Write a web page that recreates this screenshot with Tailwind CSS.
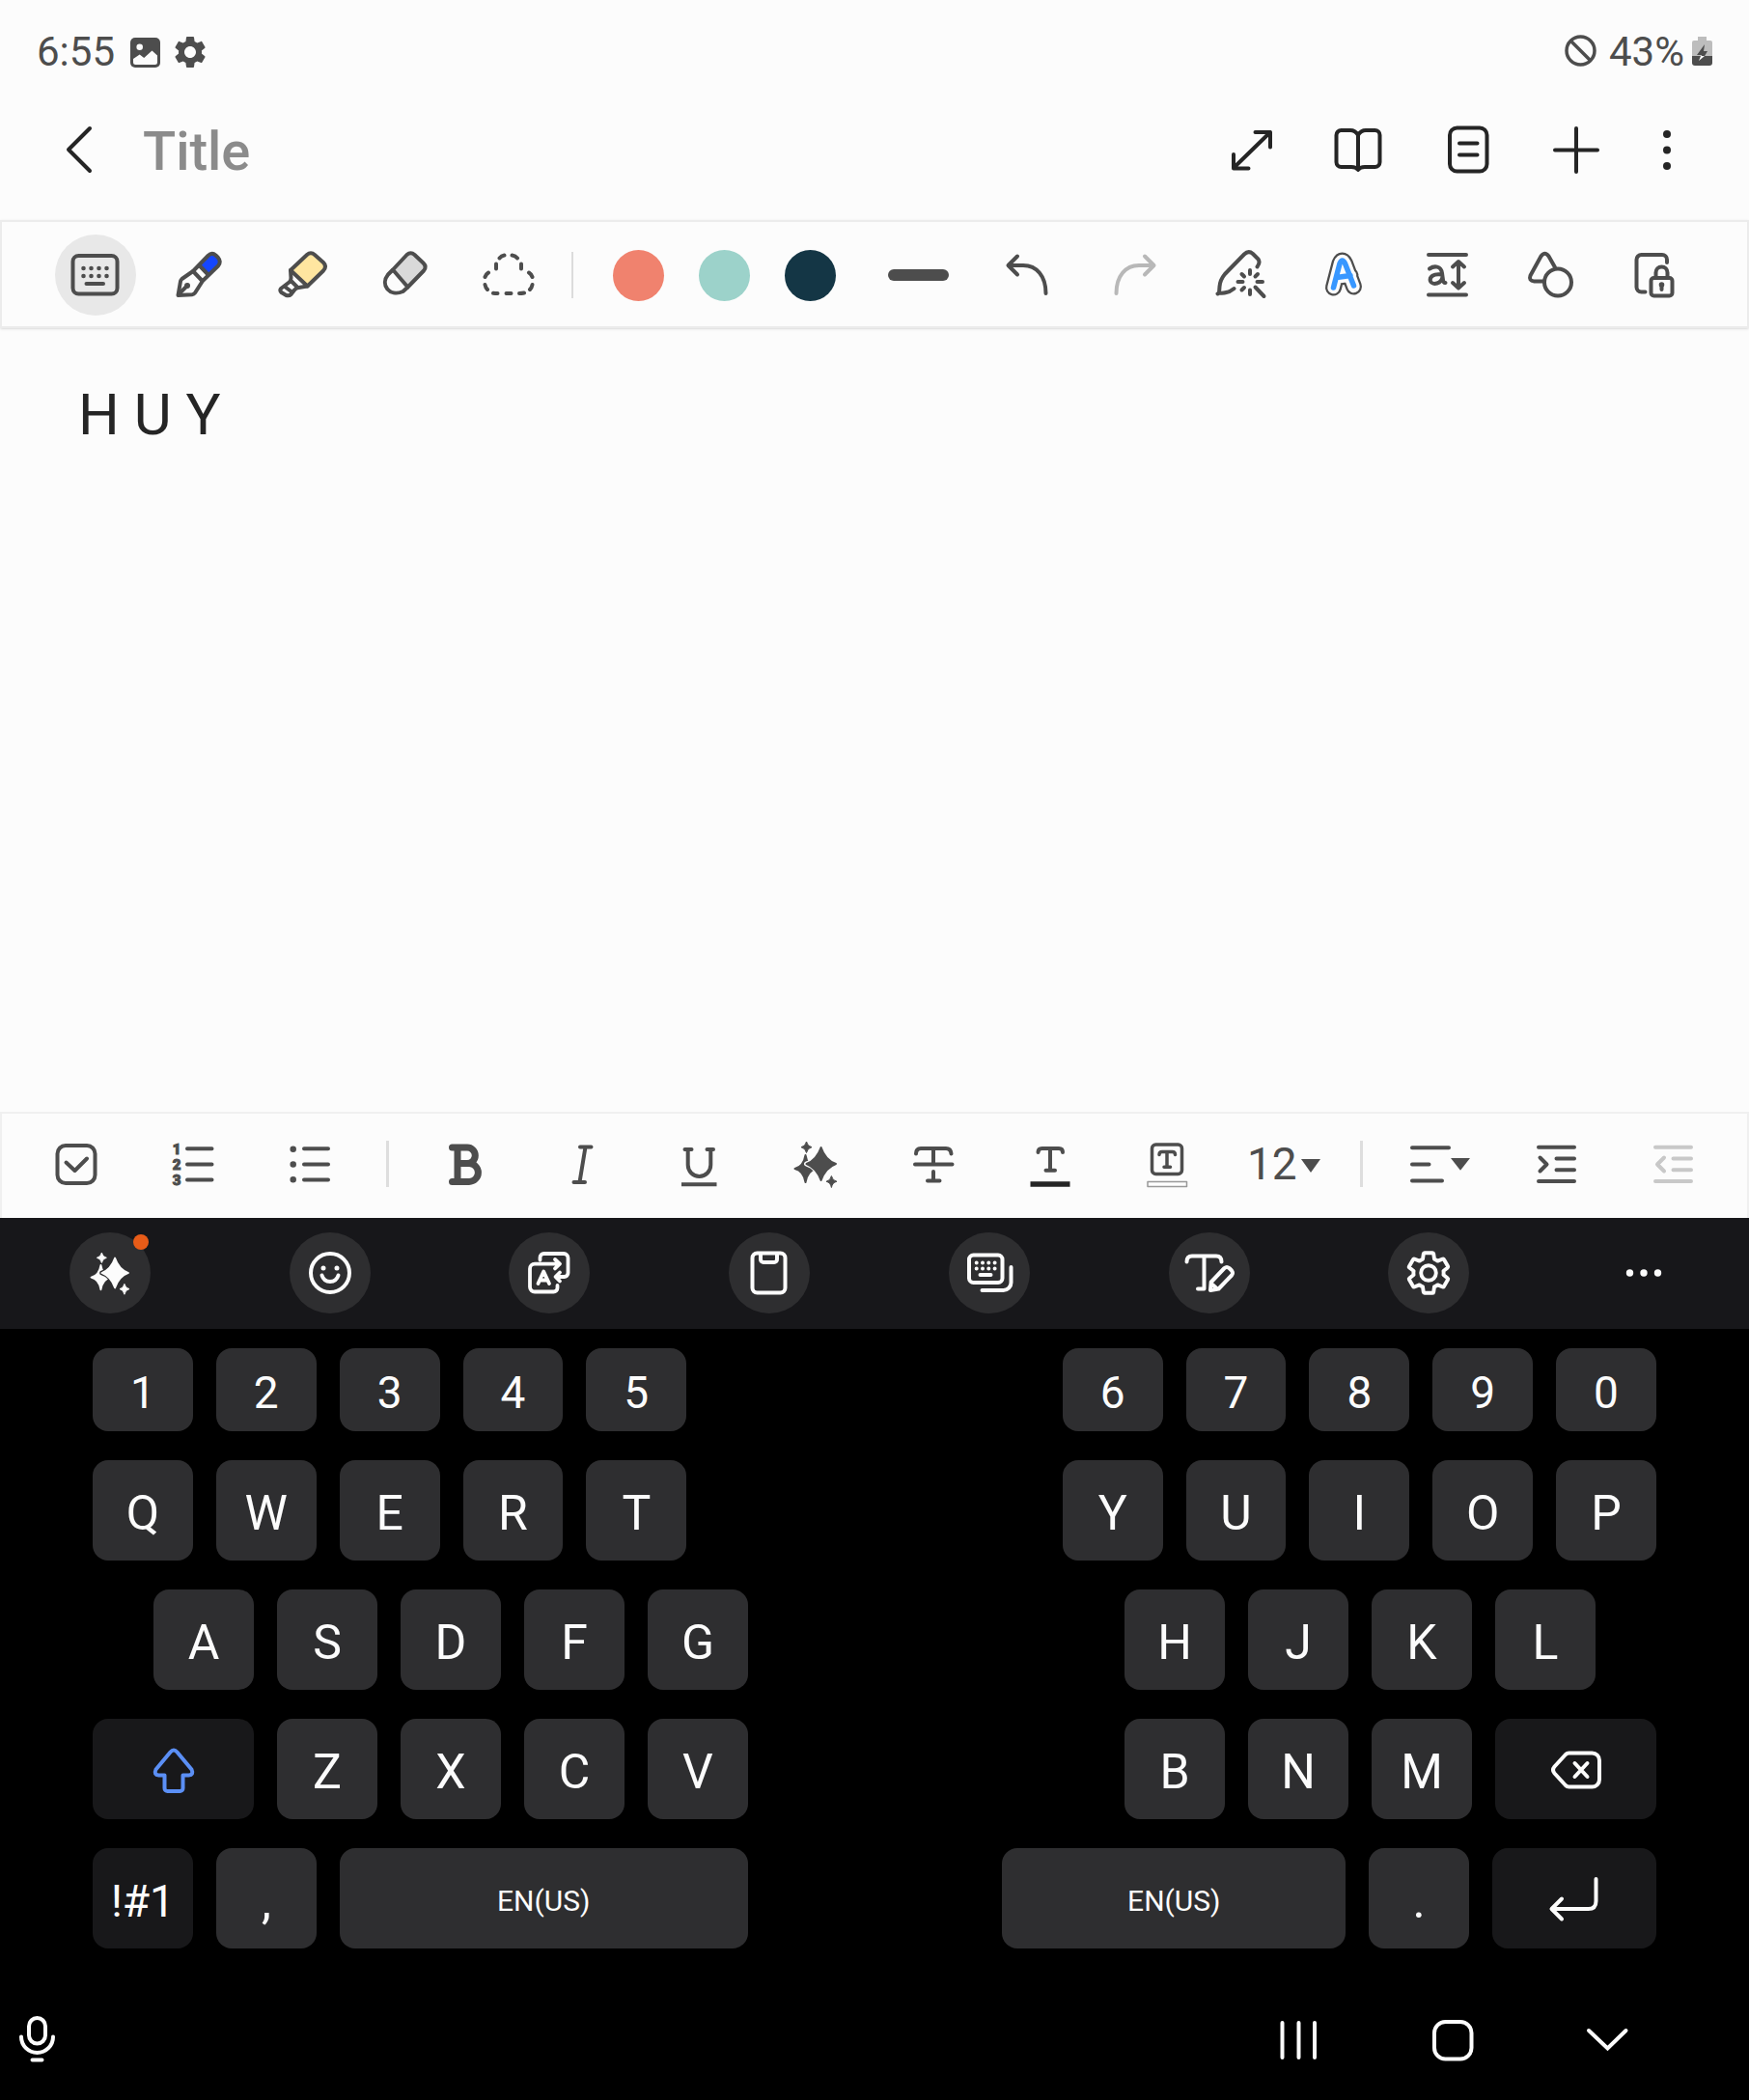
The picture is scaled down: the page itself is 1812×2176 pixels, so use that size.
<!DOCTYPE html>
<html lang="en">
<head>
<meta charset="utf-8">
<meta name="viewport" content="width=device-width, initial-scale=1">
<title>Notes</title>
<script src="https://cdn.jsdelivr.net/npm/@tailwindcss/browser@4"></script>
</head>
<body class="flex min-h-screen flex-col bg-[#fcfcfc] font-[Roboto,sans-serif] text-[#4d4d4d]">

<!-- Shared shapes -->
<svg class="hidden" aria-hidden="true">
  <symbol id="sparkles" viewBox="0 0 60 60">
    <path d="M19.5 21Q21.5 33 30.5 35Q21.5 37 19.5 49Q17.500 37 8.500 35Q17.500 33 19.500 21Z" fill="currentColor" stroke="currentColor" stroke-width="2" stroke-linejoin="round"/>
    <path d="M35.600 12Q39 27 51 30Q39 33 35.600 48Q32 33 20.500 30Q32 27 35.600 12Z" style="fill:var(--gap);stroke:var(--gap)" stroke-width="5" stroke-linejoin="round"/>
    <path d="M35.600 13Q40 26 51 30Q40 34 35.600 47Q31 34 20.500 30Q31 26 35.600 13Z" fill="currentColor" stroke="currentColor" stroke-width="2" stroke-linejoin="round"/>
    <path d="M20.500 7Q21.500 11.800 26 12.700Q21.500 13.600 20.500 18.500Q19.500 13.600 15 12.700Q19.500 11.800 20.500 7ZM46.400 42.500Q47.400 47.400 52 48.300Q47.400 49.200 46.400 54.500Q45.400 49.200 41 48.300Q45.400 47.400 46.400 42.500Z" fill="currentColor" stroke="currentColor" stroke-linejoin="round"/>
  </symbol>
  <symbol id="gear" viewBox="0 0 24 24">
    <path d="M19.140 12.940c.04-.3.06-.61.06-.94 0-.32-.02-.64-.07-.94l2.030-1.580c.18-.14.23-.41.12-.61l-1.920-3.320c-.12-.22-.37-.29-.59-.22l-2.390.96c-.5-.38-1.030-.7-1.620-.94l-.36-2.540c-.04-.24-.24-.41-.48-.41h-3.840c-.24 0-.43.17-.47.41l-.36 2.540c-.59.24-1.130.57-1.620.94l-2.390-.96c-.22-.08-.47 0-.59.22L2.740 8.870c-.12.21-.08.47.12.61l2.030 1.580c-.05.3-.09.63-.09.94s.02.64.07.94l-2.030 1.580c-.18.14-.23.41-.12.61l1.920 3.320c.12.22.37.29.59.22l2.390-.96c.5.38 1.030.7 1.620.94l.36 2.540c.05.24.24.41.48.41h3.840c.24 0 .44-.17.47-.41l.36-2.540c.59-.24 1.130-.56 1.620-.94l2.390.96c.22.08.47 0 .59-.22l1.920-3.320c.12-.22.07-.47-.12-.61l-2.010-1.580zM12 15.600c-1.980 0-3.600-1.620-3.600-3.600s1.620-3.600 3.600-3.600 3.600 1.620 3.600 3.600-1.620 3.600-3.600 3.600z"/>
  </symbol>
</svg>

<!-- Status bar -->
<div class="flex h-[82px] items-center justify-between pt-[26px] pr-[38px] pl-[38px] text-[42px] leading-none">
  <div class="flex items-center">
    <span>6:55</span>
    <svg class="ml-[16px] size-[31px]" viewBox="0 0 31 31" aria-label="Image saved"><rect width="31" height="31" rx="5" fill="#4d4d4d"/><circle cx="9.700" cy="9.700" r="3.300" fill="#fcfcfc"/><path d="M3 22l6.700-4.500 4.500 3.500L22.500 13.500 28 18.500V25.500a2.500 2.500 0 0 1-2.500 2.500H5.500A2.500 2.500 0 0 1 3 25.500Z" fill="#fcfcfc"/></svg>
    <svg class="ml-[11px] size-10 fill-[#4d4d4d]" aria-label="Settings"><use href="#gear"/></svg>
  </div>
  <div class="flex items-center">
    <svg class="mr-[13px] mb-1 size-[33px]" viewBox="0 0 33 33" fill="none" stroke="#4d4d4d" stroke-width="3.500" aria-label="Blocked"><circle cx="16.500" cy="16.500" r="14.500"/><path d="M6.500 6.500l20 20"/></svg>
    <span class="mr-[8px]">43%</span>
    <svg class="mb-1 h-[31px] w-[21px]" viewBox="0 0 21 31" aria-label="Battery charging"><path d="M6 1h9v4h4a2 2 0 0 1 2 2v14H0V7a2 2 0 0 1 2-2h4Z" fill="#bdbdbd"/><path d="M0 21h21v7a3 3 0 0 1-3 3H3a3 3 0 0 1-3-3Z" fill="#4d4d4d"/><path d="M13 9L5 20h5v1h3l3-5h-4Z" fill="#4d4d4d"/><path d="M9 21L7 26l6-5Z" fill="#fcfcfc"/></svg>
  </div>
</div>

<!-- Title bar -->
<header class="flex h-[146px] items-center pr-[43px] pl-[52px] text-[#252525] [&_svg]:size-[60px] [&_svg]:shrink-0 [&>button]:flex [&>button]:shrink-0 [&>button]:justify-center">
  <button type="button" aria-label="Back"><svg viewBox="0 0 60 60" fill="none" stroke="currentColor" stroke-width="4" stroke-linecap="round" stroke-linejoin="round"><path d="M41 8L19 30l22 22"/></svg></button>
  <input type="text" aria-label="Title" placeholder="Title" class="ml-[36px] min-w-0 flex-1 pt-1 text-[56px] leading-[66px] font-medium outline-none placeholder:text-[#8b8b8b]">
  <button type="button" aria-label="Full screen" class="w-28"><svg viewBox="0 0 60 60" fill="none" stroke="currentColor" stroke-width="4" stroke-linecap="round" stroke-linejoin="round"><path d="M11 49L49 12M11 35v14.500h15.500M33.500 12H49v15.500"/></svg></button>
  <button type="button" aria-label="Reading mode" class="w-27"><svg viewBox="0 0 60 60" fill="none" stroke="currentColor" stroke-width="4" stroke-linejoin="round"><path d="M30 15Q27 10 22 10H12.500a5 5 0 0 0-5 5v28a5 5 0 0 0 5 5H23q5 0 7 3q2-3 7-3h10.500a5 5 0 0 0 5-5V15a5 5 0 0 0-5-5H38q-5 0-8 5V50"/></svg></button>
  <button type="button" aria-label="Page list" class="w-30"><svg viewBox="0 0 60 60" fill="none" stroke="currentColor" stroke-width="4" stroke-linecap="round"><rect x="11" y="7.500" width="38.500" height="45" rx="7.500"/><path d="M21 23.500h18.500M21 35.500h18.500"/></svg></button>
  <button type="button" aria-label="Insert" class="w-26"><svg viewBox="0 0 60 60" fill="none" stroke="currentColor" stroke-width="4" stroke-linecap="round"><path d="M8 30.500h44M30 8v45"/></svg></button>
  <button type="button" aria-label="More options" class="w-21"><svg viewBox="0 0 60 60" fill="currentColor"><circle cx="30" cy="14" r="4"/><circle cx="30" cy="30.500" r="4"/><circle cx="30" cy="47" r="4"/></svg></button>
</header>

<!-- Drawing tools -->
<div role="toolbar" aria-label="Drawing tools" class="grid h-[112px] grid-cols-[repeat(5,107fr)_25fr_290fr_repeat(3,112fr)_repeat(5,107fr)] items-center border-2 border-[#ececec] px-[43px] pt-[2px] shadow-sm [&>button]:flex [&>button]:justify-center [&>button>svg]:size-[60px] [&>button>svg]:shrink-0">
  <button type="button" aria-label="Keyboard" aria-pressed="true" class="mx-auto size-[84px] items-center rounded-full bg-[#e8e8e8]"><svg viewBox="0 0 60 60" fill="none" stroke="currentColor" stroke-width="4" stroke-linecap="round"><rect x="6.500" y="10" width="46" height="39.500" rx="6"/><path d="M20.500 39H38"/><path d="M17.500 23h0M25.500 23h0M33.500 23h0M41.500 23h0M17.500 31h0M25.500 31h0M33.500 31h0M41.500 31h0" stroke-width="4.600"/></svg></button>
  <button type="button" aria-label="Pen"><svg viewBox="0 0 60 60" fill="none" stroke="currentColor" stroke-width="4" stroke-linecap="round" stroke-linejoin="round"><path d="M31 20L42 9l5 1 4 5-1 5-10 9Z" fill="#1546ff" stroke="none"/><path d="M8.500 51L11 36.500Q11.300 35 12.500 34L24 26 39.500 10Q43.500 6 47.500 9.500l2.500 2.500Q53.500 16 50 20.500L34 36 26 48.500Q25 50 23 50.200Z"/><path d="M24 26l9.500 10M30.500 20l9 9.500M9 50l9.500-9.500"/><circle cx="18" cy="41" r="1"/></svg></button>
  <button type="button" aria-label="Highlighter"><svg viewBox="0 0 60 60" fill="none" stroke="currentColor" stroke-width="4" stroke-linecap="round" stroke-linejoin="round"><path d="M18 25L35 9Q39 5.500 43 9l9 8q4 4 0 8.500L35.500 41.500Z" fill="#ffe6a0"/><path d="M18 25l.5 8q0 3-2 4.500L8 44q-1.500 2 .5 4l5 3q3 1 5-1l3.500-4.500q1.500-2 4.500-2.500l9-1.500M12 42l8 6M18.500 36l6 6"/></svg></button>
  <button type="button" aria-label="Eraser"><svg viewBox="0 0 60 60" fill="none" stroke="currentColor" stroke-width="4" stroke-linejoin="round"><path d="M17 24.500L31.500 9Q35.500 5.500 39.500 9l9 8.500q4 4 .5 8L32.500 42.500Z" fill="#d9d9d9"/><path d="M17 24.500L12 29.500C3.500 40 13.500 53 27.500 47L32.500 42.500"/></svg></button>
  <button type="button" aria-label="Lasso selection"><svg viewBox="0 0 60 60" fill="none" stroke="currentColor" stroke-width="4" stroke-linecap="round"><path d="M20.500 12.500Q22.500 10 25.500 9.500M33.500 9.500Q37 10 39 12.500M17 18.500v5M43 18.500v5M9 27.500Q6.500 29 5.500 32M51 27.500Q53.500 29 54.500 32M5.500 40Q6 43 8 45M54.500 40Q54 43 52 45M14 48.700Q16 49 18.500 49M27.500 49h5M41 49q2.500 0 5-.5"/></svg></button>
  <span class="mx-auto h-12 w-[2px] bg-[#dcdcdc]"></span>
  <div class="flex justify-center gap-9">
    <button type="button" aria-label="Coral" class="size-[53px] rounded-full bg-[#f0826e]"></button>
    <button type="button" aria-label="Mint" class="size-[53px] rounded-full bg-[#9cd2ca]"></button>
    <button type="button" aria-label="Navy" class="size-[53px] rounded-full bg-[#143645]"></button>
  </div>
  <button type="button" aria-label="Line thickness"><span class="h-3 w-[63px] rounded-full bg-[#4d4d4d]"></span></button>
  <button type="button" aria-label="Undo"><svg viewBox="0 0 60 60" fill="none" stroke="currentColor" stroke-width="4" stroke-linecap="round" stroke-linejoin="round"><path d="M20 10.500L10.500 20 20 29.500M11 20H26C40 20 49.500 31 49.500 49"/></svg></button>
  <button type="button" aria-label="Redo" class="text-[#b8b8b8]"><svg viewBox="0 0 60 60" fill="none" stroke="currentColor" stroke-width="4" stroke-linecap="round" stroke-linejoin="round"><path d="M40 10.500L49.500 20 40 29.500M49 20H34C20 20 10.500 31 10.500 49"/></svg></button>
  <button type="button" aria-label="Sketch assist"><svg viewBox="0 0 60 60" fill="none" stroke="currentColor" stroke-width="4" stroke-linecap="round" stroke-linejoin="round"><path d="M47.500 21.500Q51 17 48.500 13.500L43 8Q38.500 4 34 8.500L14 29Q9 35 8.500 42L8 48.500 6.500 49.500M8 48.500Q17 49.500 23.500 44"/><path d="M40 25v4M40 45.500v4.500M27.500 37h5M47.500 37H53M31.500 29l2.500 2.500M48 29l-2.500 2.500M31.500 45.500l2.500-2.500M45.500 42.500l9 9.500"/></svg></button>
  <button type="button" aria-label="Text recognition"><svg viewBox="0 0 60 60" fill="none" stroke-linecap="round" stroke-linejoin="round"><path d="M19.500 43L26 18Q28.500 12 31.500 18L40.500 42M23 32.500L37 30.500" stroke="#4d4d4d" stroke-width="17"/><path d="M19.500 43L26 18Q28.500 12 31.500 18L40.500 42M23 32.500L37 30.500" stroke="#fcfcfc" stroke-width="12.500"/><path d="M19.500 43L26 18Q28.500 12 31.500 18L40.500 41M23 32.500L37 30.500" stroke="#3897ff" stroke-width="5.500"/></svg></button>
  <button type="button" aria-label="Auto text size"><svg viewBox="0 0 60 60" fill="none" stroke="currentColor" stroke-width="4" stroke-linecap="round" stroke-linejoin="round"><path d="M11 9h39M11 50.500h39M42 17v26M36 21.500l6-5.500 6 5.500M36 38l6 5.500 6-5.500"/><path d="M12 23.500C17 20 24 20.500 25 28L26 35Q26.500 38.500 28.500 38M25 29.500C16 28 11.500 32 13 36.500C15 41 25 39 25.500 31.500"/></svg></button>
  <button type="button" aria-label="Shapes"><svg viewBox="0 0 60 60" fill="none" stroke="currentColor" stroke-width="4" stroke-linecap="round" stroke-linejoin="round"><circle cx="38" cy="37.500" r="14"/><path d="M23.500 36.500H13.500Q7.500 36 9.500 30.500L20.500 10.500Q24.500 5 28.500 10.500L35 22"/></svg></button>
  <button type="button" aria-label="Lock canvas"><svg viewBox="0 0 60 60" fill="none" stroke="currentColor" stroke-width="4" stroke-linecap="round" stroke-linejoin="round"><path d="M44 17V14a5 5 0 0 0-5-5H17.500a5 5 0 0 0-5 5v28.500a5 5 0 0 0 5 5H21.500"/><rect x="27.500" y="33" width="22" height="18.500" rx="3"/><path d="M32.500 33v-5.500a6 6 0 0 1 12 0V33M38.500 40v5"/><circle cx="38.500" cy="40" r=".8"/></svg></button>
</div>

<!-- Note body -->
<main class="flex flex-1">
  <textarea aria-label="Note" class="flex-1 resize-none px-[81px] pt-[55px] text-[60px] leading-[70px] text-[#252525] outline-none">H U Y</textarea>
</main>

<!-- Text formatting -->
<div role="toolbar" aria-label="Text formatting" class="grid h-[110px] grid-cols-[repeat(3,121fr)_40fr_repeat(8,121fr)_40fr_repeat(3,121fr)] items-center border-x-2 border-t-2 border-[#f0f0f0] px-[16px] pb-[4px] [--gap:#fcfcfc] [&>button]:flex [&>button]:justify-center [&>button>svg]:h-[60px] [&>button>svg]:w-[60px] [&>button>svg]:shrink-0">
  <button type="button" aria-label="Checklist"><svg viewBox="0 0 60 60" fill="none" stroke="currentColor" stroke-width="4" stroke-linecap="round" stroke-linejoin="round"><rect x="10.500" y="11" width="39" height="39" rx="8.500"/><path d="M19.500 28.500l9 8.500L41 24.500"/></svg></button>
  <button type="button" aria-label="Numbered list"><svg viewBox="0 0 60 60" stroke-linecap="round"><g fill="currentColor" stroke="currentColor" class="text-[15px] font-black" text-anchor="middle"><text x="13" y="20">1</text><text x="13" y="36">2</text><text x="13" y="52">3</text></g><path d="M24 14.300h25.500M24 30.400h25.500M24 46.500h25.500" stroke="currentColor" stroke-width="4"/></svg></button>
  <button type="button" aria-label="Bulleted list"><svg viewBox="0 0 60 60" stroke-linecap="round" stroke="currentColor"><path d="M12.700 14.700h0M12.700 30.500h0M12.700 46.300h0" stroke-width="6.500"/><path d="M24 14.300h25M24 30.400h25M24 46.500h25" stroke-width="4"/></svg></button>
  <span class="mx-auto h-12 w-[3px] bg-[#dedede]"></span>
  <button type="button" aria-label="Bold"><svg viewBox="0 0 60 60" fill="none" stroke="currentColor" stroke-width="7" stroke-linecap="round" stroke-linejoin="round"><path d="M16.500 13H32a8.300 8.300 0 0 1 0 16.600H22M32 29.600h2a9.400 9.400 0 0 1 0 18.800H16.500M22 13v35"/></svg></button>
  <button type="button" aria-label="Italic"><svg viewBox="0 0 60 60" fill="none" stroke="currentColor" stroke-width="4" stroke-linecap="round"><path d="M28 12.500h11.500M21.500 49H33M33.500 12.500L27.500 49"/></svg></button>
  <button type="button" aria-label="Underline"><svg viewBox="0 0 60 60" fill="none" stroke="currentColor" stroke-width="4" stroke-linecap="round"><path d="M15.500 15h7M38.500 15h6.500M18.700 15V31a11.800 12 0 0 0 23.600 0V15"/><path d="M12 51.300h36.500" stroke-linecap="butt"/></svg></button>
  <button type="button" aria-label="Writing assist"><svg><use href="#sparkles"/></svg></button>
  <button type="button" aria-label="Strikethrough"><svg viewBox="0 0 60 60" fill="none" stroke="currentColor" stroke-width="4" stroke-linecap="round" stroke-linejoin="round"><path d="M12 19.500q0-5.500 5-5.500H43q5 0 5.500 5.500M30 14V29M11 30.500h38.500M30 38v9M24 47.500h12.500"/></svg></button>
  <button type="button" aria-label="Text color"><svg viewBox="0 0 60 60" fill="none" stroke="currentColor" stroke-width="4" stroke-linecap="round" stroke-linejoin="round"><path d="M17.500 18q0-4 4-4h17.500q4 0 4 4M30 14v22.500M25.500 36.700h9.500"/><path d="M9.500 51h41" stroke="#252525" stroke-width="5.500" stroke-linecap="butt"/></svg></button>
  <button type="button" aria-label="Text background color"><svg viewBox="0 0 60 60" fill="none" stroke="currentColor" stroke-width="3.500" stroke-linecap="round" stroke-linejoin="round"><rect x="14.500" y="10" width="31" height="30.500" rx="4"/><path d="M22 20.500q0-3 3-3h10.500q3 0 3 3M30 17.500v15.500M27 33.300h6.500"/><rect x="10" y="48.500" width="40.500" height="5" fill="#fff" stroke="#999" stroke-width="1.500"/></svg></button>
  <label class="flex items-center justify-center">
    <select aria-label="Font size" class="w-[56px] appearance-none text-[46px] leading-[54px] outline-none"><option>12</option></select>
    <svg class="mt-1 h-[14px] w-[20px] fill-current" viewBox="0 0 20 14"><path d="M0 0h20L10 14Z"/></svg>
  </label>
  <span class="mx-auto h-12 w-[3px] bg-[#dedede]"></span>
  <button type="button" aria-label="Alignment"><svg viewBox="0 0 60 60" class="overflow-visible" fill="none" stroke="currentColor" stroke-width="4" stroke-linecap="round"><path d="M2 13.300h38M2 30.400h17.500M2 47.500h31"/><path d="M42 24h20L52 36.700Z" fill="currentColor" stroke="none"/></svg></button>
  <button type="button" aria-label="Increase indent"><svg viewBox="0 0 60 60" fill="none" stroke="currentColor" stroke-width="4" stroke-linecap="round" stroke-linejoin="round"><path d="M12 12.700h37M30.500 24.500H49M30.500 36.300H49M12 48h37M13.500 23.500l7 7-7 7"/></svg></button>
  <button type="button" aria-label="Decrease indent" class="text-[#c8c8c8]"><svg viewBox="0 0 60 60" fill="none" stroke="currentColor" stroke-width="4" stroke-linecap="round" stroke-linejoin="round"><path d="M12 12.700h37M30.500 24.500H49M30.500 36.300H49M12 48h37M21 23.500l-7 7 7 7"/></svg></button>
</div>

<!-- On-screen keyboard -->
<section aria-label="On-screen keyboard" class="bg-black text-[#fcfcfc]">
  <div role="toolbar" aria-label="Keyboard tools" class="flex h-[115px] items-center justify-between bg-[#17171a] px-[72px] pb-[2px] [--gap:#2e2e30] [&_svg]:size-[60px] [&_svg]:shrink-0 [&>button]:flex [&>button]:h-[84px] [&>button]:items-center [&>button]:justify-center [&>button]:rounded-full">
    <button type="button" aria-label="Writing assist" class="relative w-[84px] bg-[#2e2e30]"><svg viewBox="-3 -3 66 66"><use href="#sparkles" width="60" height="60"/></svg><span class="absolute top-[2px] right-[2px] size-4 rounded-full bg-[#e85c18]"></span></button>
    <button type="button" aria-label="Emoji" class="w-[84px] bg-[#2e2e30]"><svg viewBox="0 0 60 60" fill="none" stroke="currentColor" stroke-width="4" stroke-linecap="round"><circle cx="30" cy="30" r="20"/><path d="M21.500 32.500q2 6.500 8.500 6.500t8.500-6.500"/><path d="M23 25h0M37 25h0" stroke-width="5"/></svg></button>
    <button type="button" aria-label="Translate" class="w-[84px] bg-[#2e2e30]"><svg viewBox="0 0 60 60" fill="none" stroke="currentColor" stroke-width="3.800" stroke-linecap="round" stroke-linejoin="round"><path d="M40.500 20.700H15a5 5 0 0 0-5 5V44.500a5 5 0 0 0 5 5H34.500a4 4 0 0 0 4-4V43M36 16l5 4.700-5 4.700M20.500 16.500V14a4 4 0 0 1 4-4H45a4.500 4.500 0 0 1 4.500 4.500V30a4 4 0 0 1-4 4H37M41 29.500L36.500 34l4.500 4.500M18.500 41l5.700-12.500L30 41M20.500 37.500h7.500"/></svg></button>
    <button type="button" aria-label="Clipboard" class="w-[84px] bg-[#2e2e30]"><svg viewBox="0 0 60 60" fill="none" stroke="currentColor" stroke-width="4" stroke-linejoin="round"><rect x="12.500" y="9.500" width="34" height="41" rx="5"/><path d="M21 9.500V16a3 3 0 0 0 3 3H35a3 3 0 0 0 3-3V9.500"/></svg></button>
    <button type="button" aria-label="Keyboard modes" class="w-[84px] bg-[#2e2e30]"><svg viewBox="0 0 60 60" fill="none" stroke="currentColor" stroke-width="4" stroke-linecap="round"><rect x="9" y="11.500" width="34.500" height="28.500" rx="4.500"/><path d="M20.500 32h11M52.500 24V40a8 8 0 0 1-8 8H22.500M16.700 19.500h0M23 19.500h0M29.300 19.500h0M35.600 19.500h0M16.700 25.500h0M23 25.500h0M29.300 25.500h0M35.600 25.500h0"/></svg></button>
    <button type="button" aria-label="Handwriting" class="w-[84px] bg-[#2e2e30]"><svg viewBox="0 0 60 60" fill="none" stroke="currentColor" stroke-width="4" stroke-linecap="round" stroke-linejoin="round"><path d="M6.500 18.500q0-6 5.500-6H37q5.500 0 5.500 6M24.500 12.500V46.500H18M31 48l.7-8.500L45.500 25q2.500-2 5 0l2.500 2.500q2 2.500 0 5L39.500 46.500ZM32 41l6 5.500"/></svg></button>
    <button type="button" aria-label="Keyboard settings" class="w-[84px] bg-[#2e2e30]"><svg viewBox="0 0 60 60" fill="none" stroke="currentColor"><use href="#gear" x="4" y="4" width="52" height="52" stroke-width="1.800" stroke-linejoin="round"/></svg></button>
    <button type="button" aria-label="More tools" class="w-[74px]"><svg viewBox="0 0 60 60" fill="currentColor"><circle cx="15.500" cy="30" r="3.700"/><circle cx="30" cy="30" r="3.700"/><circle cx="44.500" cy="30" r="3.700"/></svg></button>
  </div>

  <div class="flex flex-col gap-[30px] px-24 pt-5 pb-[33px] text-[50px] leading-none [&_button]:flex [&_button]:items-center [&_button]:justify-center [&_button]:rounded-2xl [&_button]:pt-[5px] [&>div]:flex [&>div]:h-[104px] [&>div]:gap-6">
    <div class="max-h-[86px] text-[46px]">
      <button type="button" class="flex-[104] bg-[#2e2e30]">1</button>
      <button type="button" class="flex-[104] bg-[#2e2e30]">2</button>
      <button type="button" class="flex-[104] bg-[#2e2e30]">3</button>
      <button type="button" class="flex-[104] bg-[#2e2e30]">4</button>
      <button type="button" class="flex-[104] bg-[#2e2e30]">5</button>
      <span class="flex-[342]"></span>
      <button type="button" class="flex-[104] bg-[#2e2e30]">6</button>
      <button type="button" class="flex-[104] bg-[#2e2e30]">7</button>
      <button type="button" class="flex-[104] bg-[#2e2e30]">8</button>
      <button type="button" class="flex-[104] bg-[#2e2e30]">9</button>
      <button type="button" class="flex-[104] bg-[#2e2e30]">0</button>
    </div>
    <div>
      <button type="button" class="flex-[104] bg-[#2e2e30]">Q</button>
      <button type="button" class="flex-[104] bg-[#2e2e30]">W</button>
      <button type="button" class="flex-[104] bg-[#2e2e30]">E</button>
      <button type="button" class="flex-[104] bg-[#2e2e30]">R</button>
      <button type="button" class="flex-[104] bg-[#2e2e30]">T</button>
      <span class="flex-[342]"></span>
      <button type="button" class="flex-[104] bg-[#2e2e30]">Y</button>
      <button type="button" class="flex-[104] bg-[#2e2e30]">U</button>
      <button type="button" class="flex-[104] bg-[#2e2e30]">I</button>
      <button type="button" class="flex-[104] bg-[#2e2e30]">O</button>
      <button type="button" class="flex-[104] bg-[#2e2e30]">P</button>
    </div>
    <div>
      <span class="flex-[39]"></span>
      <button type="button" class="flex-[104] bg-[#2e2e30]">A</button>
      <button type="button" class="flex-[104] bg-[#2e2e30]">S</button>
      <button type="button" class="flex-[104] bg-[#2e2e30]">D</button>
      <button type="button" class="flex-[104] bg-[#2e2e30]">F</button>
      <button type="button" class="flex-[104] bg-[#2e2e30]">G</button>
      <span class="flex-[342]"></span>
      <button type="button" class="flex-[104] bg-[#2e2e30]">H</button>
      <button type="button" class="flex-[104] bg-[#2e2e30]">J</button>
      <button type="button" class="flex-[104] bg-[#2e2e30]">K</button>
      <button type="button" class="flex-[104] bg-[#2e2e30]">L</button>
      <span class="flex-[39]"></span>
    </div>
    <div>
      <button type="button" aria-label="Shift" class="flex-[167] bg-[#18181a]"><svg class="size-[60px]" viewBox="0 0 60 60" fill="none" stroke="#5b8ff5" stroke-width="4" stroke-linejoin="round"><path d="M26.500 9.500Q30 5.500 33.500 9.500L48.500 27.500Q51 33 45.500 33.500H39.500V47a3 3 0 0 1-3 3h-13a3 3 0 0 1-3-3V33.500H14.500Q9 33 11.500 27.500Z"/></svg></button>
      <button type="button" class="flex-[104] bg-[#2e2e30]">Z</button>
      <button type="button" class="flex-[104] bg-[#2e2e30]">X</button>
      <button type="button" class="flex-[104] bg-[#2e2e30]">C</button>
      <button type="button" class="flex-[104] bg-[#2e2e30]">V</button>
      <span class="flex-[342]"></span>
      <button type="button" class="flex-[104] bg-[#2e2e30]">B</button>
      <button type="button" class="flex-[104] bg-[#2e2e30]">N</button>
      <button type="button" class="flex-[104] bg-[#2e2e30]">M</button>
      <button type="button" aria-label="Backspace" class="flex-[167] bg-[#18181a]"><svg class="size-[60px]" viewBox="0 0 60 60" fill="none" stroke="currentColor" stroke-width="4" stroke-linecap="round" stroke-linejoin="round"><path d="M22.500 10.500H46.500a7.500 7.500 0 0 1 7.500 7.500V38a7.500 7.500 0 0 1-7.500 7.500H22.500Q20.500 45.500 19 44L7.500 31.500Q4.500 28 7.500 24.500L19 12Q20.500 10.500 22.500 10.500ZM28.500 21l13 14M41.500 21L28.500 35"/></svg></button>
    </div>
    <div>
      <button type="button" aria-label="Symbols" class="flex-[104] bg-[#18181a] text-[46px]">!#1</button>
      <button type="button" class="flex-[104] bg-[#2e2e30]">,</button>
      <button type="button" aria-label="Space, left" class="flex-[423] bg-[#2e2e30] text-[30px]">EN(US)</button>
      <span class="flex-[216]"></span>
      <button type="button" aria-label="Space, right" class="flex-[356] bg-[#2e2e30] text-[30px]">EN(US)</button>
      <button type="button" class="flex-[104] bg-[#2e2e30]">.</button>
      <button type="button" aria-label="Enter" class="flex-[170] bg-[#18181a]"><svg class="size-[60px]" viewBox="0 0 60 60" fill="none" stroke="currentColor" stroke-width="4" stroke-linecap="round" stroke-linejoin="round"><path d="M52.500 7V30q0 8-8 8H7M17 27.500L6.500 38 17 48.500"/></svg></button>
    </div>
  </div>

  <!-- System navigation -->
  <nav aria-label="System navigation" class="flex h-[124px] items-center pr-[67px] pl-2 [&_svg]:size-[60px] [&>button]:flex [&>button]:justify-center">
    <button type="button" aria-label="Voice input" class="mr-auto"><svg viewBox="0 0 60 60" fill="none" stroke="currentColor" stroke-width="4" stroke-linecap="round"><rect x="22" y="7" width="17" height="26.500" rx="8.500"/><path d="M14 26.500a16.500 16.500 0 0 0 33 0M25.500 50.500h10"/></svg></button>
    <button type="button" aria-label="Recent apps" class="w-40"><svg viewBox="0 0 60 60" stroke="currentColor" stroke-width="4" stroke-linecap="round"><path d="M13.500 12v36M30.500 12v36M47 12v36"/></svg></button>
    <button type="button" aria-label="Home" class="w-40"><svg viewBox="0 0 60 60" fill="none" stroke="currentColor" stroke-width="4"><rect x="11" y="11" width="38.500" height="38.500" rx="11.500"/></svg></button>
    <button type="button" aria-label="Hide keyboard" class="w-40"><svg viewBox="0 0 60 60" fill="none" stroke="currentColor" stroke-width="4" stroke-linecap="round"><path d="M11 20l19.500 18.500L49.500 20"/></svg></button>
  </nav>
</section>
</body>
</html>
